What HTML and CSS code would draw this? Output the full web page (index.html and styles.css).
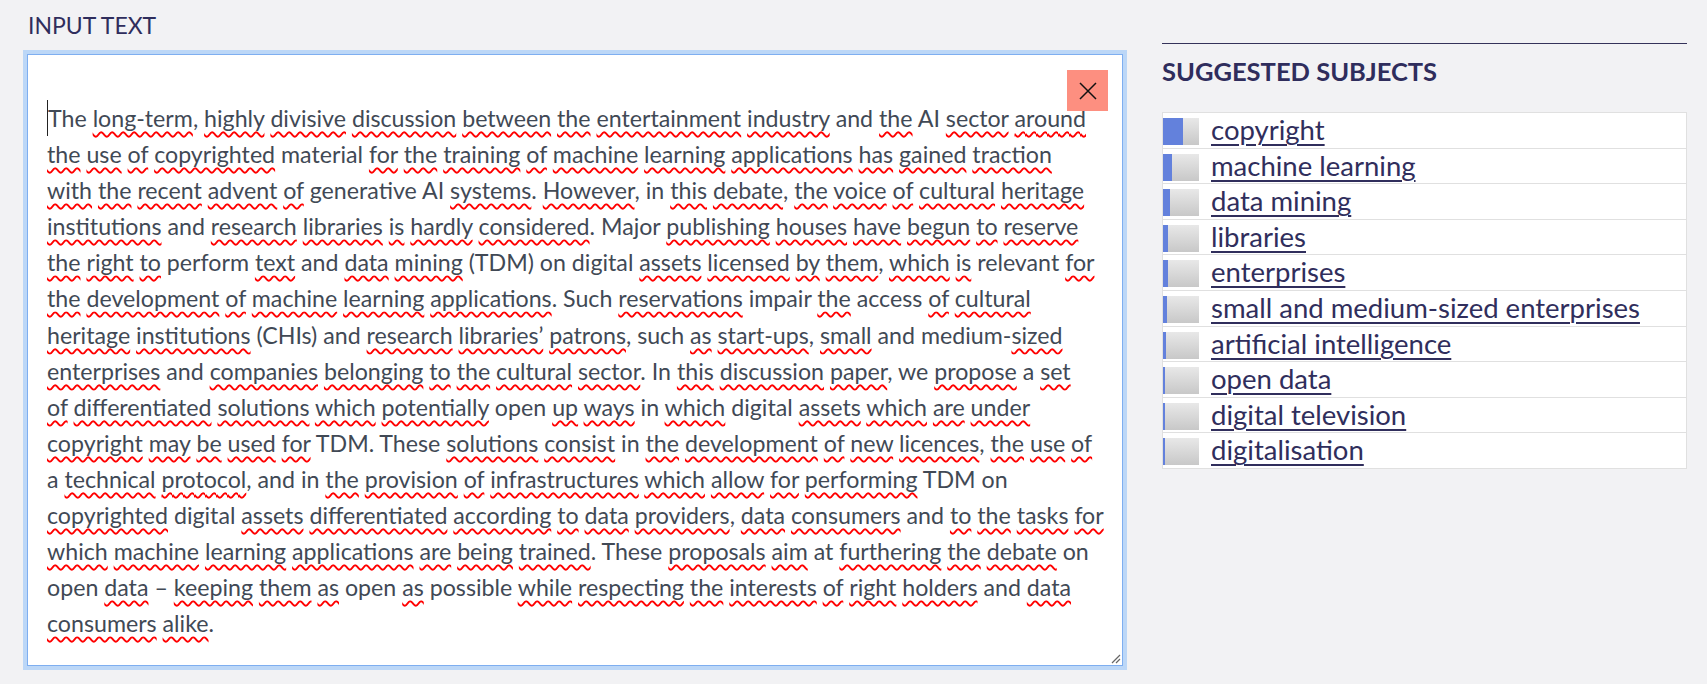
FILE: index.html
```html
<!DOCTYPE html>
<html lang="en">
<head>
    <meta charset="UTF-8">
    <title>Subject Indexing</title>
    <link rel="stylesheet" href="styles.css">
</head>
<body>
    <main class="page">
        <section class="input-col">
            <h2 class="label">INPUT TEXT</h2>
            <div class="input-box">
                <button class="clear-btn" type="button" aria-label="Clear">
                    <svg width="18" height="18" viewBox="0 0 18 18">
                        <path d="M1 1 L17 17 M17 1 L1 17" stroke="#111" stroke-width="1.5" fill="none"/>
                    </svg>
                </button>
                <div class="text" contenteditable="true" spellcheck="false">
                    <div class="ln"><span class="caret"></span>The <u>long-term</u>, <u>highly</u> <u>divisive</u> <u>discussion</u> <u>between</u> <u>the</u> <u>entertainment</u> <u>industry</u> and <u>the</u> AI <u>sector</u> <u>around</u></div>
                    <div class="ln"><u>the</u> <u>use</u> <u>of</u> <u>copyrighted</u> material <u>for</u> <u>the</u> <u>training</u> <u>of</u> <u>machine</u> <u>learning</u> <u>applications</u> <u>has</u> <u>gained</u> <u>traction</u></div>
                    <div class="ln"><u>with</u> <u>the</u> <u>recent</u> <u>advent</u> <u>of</u> generative AI <u>systems</u>. <u>However</u>, in <u>this</u> <u>debate</u>, <u>the</u> <u>voice</u> <u>of</u> <u>cultural</u> <u>heritage</u></div>
                    <div class="ln"><u>institutions</u> and <u>research</u> <u>libraries</u> <u>is</u> <u>hardly</u> <u>considered</u>. Major <u>publishing</u> <u>houses</u> <u>have</u> <u>begun</u> <u>to</u> <u>reserve</u></div>
                    <div class="ln"><u>the</u> <u>right</u> <u>to</u> perform <u>text</u> and <u>data</u> <u>mining</u> (TDM) on digital <u>assets</u> <u>licensed</u> <u>by</u> <u>them</u>, <u>which</u> <u>is</u> relevant <u>for</u></div>
                    <div class="ln"><u>the</u> <u>development</u> <u>of</u> <u>machine</u> <u>learning</u> <u>applications</u>. Such <u>reservations</u> impair <u>the</u> access <u>of</u> <u>cultural</u></div>
                    <div class="ln"><u>heritage</u> <u>institutions</u> (CHIs) and <u>research</u> <u>libraries’</u> <u>patrons</u>, such <u>as</u> <u>start-ups</u>, <u>small</u> and medium-<u>sized</u></div>
                    <div class="ln"><u>enterprises</u> and <u>companies</u> <u>belonging</u> <u>to</u> <u>the</u> <u>cultural</u> <u>sector</u>. In <u>this</u> <u>discussion</u> <u>paper</u>, we <u>propose</u> a <u>set</u></div>
                    <div class="ln"><u>of</u> <u>differentiated</u> <u>solutions</u> <u>which</u> <u>potentially</u> open <u>up</u> <u>ways</u> in <u>which</u> digital <u>assets</u> <u>which</u> <u>are</u> <u>under</u></div>
                    <div class="ln"><u>copyright</u> <u>may</u> <u>be</u> <u>used</u> <u>for</u> TDM. These <u>solutions</u> <u>consist</u> in <u>the</u> <u>development</u> <u>of</u> <u>new</u> <u>licences</u>, <u>the</u> <u>use</u> <u>of</u></div>
                    <div class="ln">a <u>technical</u> <u>protocol</u>, and in <u>the</u> <u>provision</u> <u>of</u> <u>infrastructures</u> <u>which</u> <u>allow</u> <u>for</u> <u>performing</u> TDM on</div>
                    <div class="ln"><u>copyrighted</u> digital <u>assets</u> <u>differentiated</u> <u>according</u> <u>to</u> <u>data</u> <u>providers</u>, <u>data</u> <u>consumers</u> and <u>to</u> <u>the</u> <u>tasks</u> <u>for</u></div>
                    <div class="ln"><u>which</u> <u>machine</u> <u>learning</u> <u>applications</u> <u>are</u> <u>being</u> <u>trained</u>. These <u>proposals</u> <u>aim</u> at <u>furthering</u> <u>the</u> <u>debate</u> on</div>
                    <div class="ln">open <u>data</u> – <u>keeping</u> <u>them</u> <u>as</u> open <u>as</u> possible <u>while</u> <u>respecting</u> <u>the</u> <u>interests</u> <u>of</u> <u>right</u> <u>holders</u> and <u>data</u></div>
                    <div class="ln"><u>consumers</u> <u>alike</u>.</div>
                </div>
                <svg class="grip" width="12" height="12" viewBox="0 0 12 12">
                    <path d="M11 3 L3 11 M11 7 L7 11" stroke="#666" stroke-width="1.2" fill="none"/>
                </svg>
            </div>
        </section>

        <aside class="subjects">
            <h2 class="subjects-title">SUGGESTED SUBJECTS</h2>
            <ul class="subject-list">
                <li><span class="score"><span class="score-fill" style="width: 20px"></span></span><a href="#">copyright</a></li>
                <li><span class="score"><span class="score-fill" style="width: 9px"></span></span><a href="#">machine learning</a></li>
                <li><span class="score"><span class="score-fill" style="width: 7px"></span></span><a href="#">data mining</a></li>
                <li><span class="score"><span class="score-fill" style="width: 5px"></span></span><a href="#">libraries</a></li>
                <li><span class="score"><span class="score-fill" style="width: 5px"></span></span><a href="#">enterprises</a></li>
                <li><span class="score"><span class="score-fill" style="width: 4px"></span></span><a href="#">small and medium-sized enterprises</a></li>
                <li><span class="score"><span class="score-fill" style="width: 3px"></span></span><a href="#">artificial intelligence</a></li>
                <li><span class="score"><span class="score-fill" style="width: 2px"></span></span><a href="#">open data</a></li>
                <li><span class="score"><span class="score-fill" style="width: 2px"></span></span><a href="#">digital television</a></li>
                <li><span class="score"><span class="score-fill" style="width: 2px"></span></span><a href="#">digitalisation</a></li>
            </ul>
        </aside>
    </main>
</body>
</html>
```

FILE: styles.css
```css
* {
    margin: 0;
    padding: 0;
    box-sizing: border-box;
}

body {
    font-family: 'Lato', 'Noto Sans', sans-serif;
    background: #f2f2f4;
    color: #414955;
    height: 100vh;
    overflow: hidden;
}

.page {
    display: grid;
    grid-template-columns: 1096px 525px;
    column-gap: 39px;
    padding: 12px 0 0 27px;
}

.label {
    font-size: 23px;
    font-weight: 400;
    line-height: 26px;
    color: #2f2d5c;
    margin: 0 0 16px 1px;
}

.input-box {
    position: relative;
    height: 612px;
    background: #fff;
    border: 1px solid #7eaef0;
    box-shadow: 0 0 0 4px #bcd7f7;
}

.text {
    padding: 45px 0 0 19px;
    font-size: 23.2px;
    line-height: 36.1px;
    outline: none;
}

.ln {
    white-space: nowrap;
}

.text u {
    text-decoration: underline wavy #f00;
    text-decoration-thickness: 1.5px;
    text-underline-offset: 4px;
    text-decoration-skip-ink: none;
}

.caret {
    display: inline-block;
    width: 1px;
    height: 36px;
    vertical-align: top;
    background: #222;
}

.clear-btn {
    position: absolute;
    top: 15px;
    right: 14px;
    width: 41px;
    height: 41px;
    border: none;
    background: #fd8f80;
    display: flex;
    align-items: center;
    justify-content: center;
    cursor: pointer;
}

.grip {
    position: absolute;
    right: 1px;
    bottom: 1px;
}

/* right column */
.subjects {
    padding-top: 31px;
}

.subjects-title {
    border-top: 1px solid #35335a;
    padding-top: 12px;
    font-size: 25.5px;
    font-weight: 700;
    line-height: 30px;
    color: #2f2d5c;
    margin-bottom: 26px;
}

.subject-list {
    list-style: none;
    background: #fff;
    border: 1px solid #e0e0e0;
}

.subject-list li {
    display: flex;
    align-items: flex-start;
    gap: 12px;
    height: 35.6px;
    border-top: 1px solid #e0e0e0;
}

.subject-list li:first-child {
    border-top: none;
    height: 34.6px;
}

.score {
    display: block;
    flex: none;
    width: 36px;
    height: 27px;
    margin-top: 5px;
    background: linear-gradient(#e8e8e8, #c8c8c8);
}

.score-fill {
    display: block;
    height: 100%;
    background: #6381dc;
}

.subject-list a {
    font-size: 27.5px;
    line-height: 34px;
    color: #302e5c;
    text-decoration: underline;
    text-decoration-thickness: 2px;
    text-underline-offset: 4px;
}
```
